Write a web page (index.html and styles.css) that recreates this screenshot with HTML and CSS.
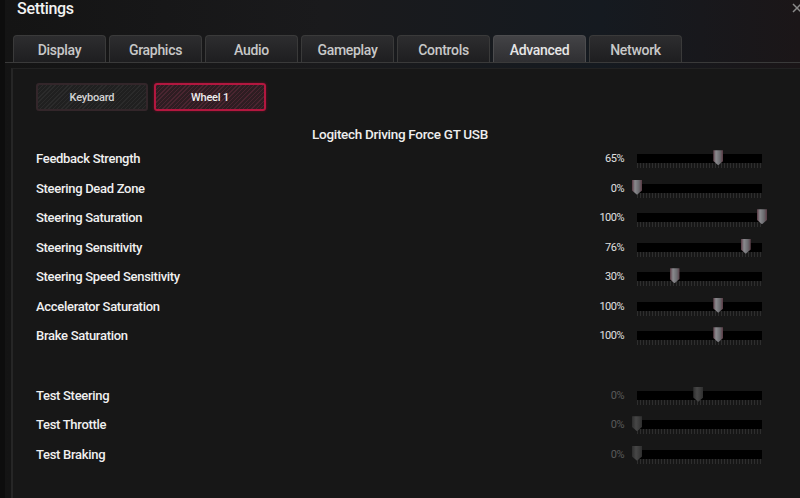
FILE: index.html
```html
<!DOCTYPE html>
<html lang="en">
<head>
    <meta charset="UTF-8">
    <title>Settings</title>
    <link rel="stylesheet" href="styles.css">
</head>
<body>

<div class="window">
    <header class="titlebar">
        <h1>Settings</h1>
        <svg class="close" width="8" height="12" viewBox="0 0 8 12"><path d="M1 2 L9 10 M9 2 L1 10" stroke="#8a8a8a" stroke-width="1.5"/></svg>
    </header>

    <nav class="tabs">
        <div class="tab">Display</div>
        <div class="tab">Graphics</div>
        <div class="tab">Audio</div>
        <div class="tab">Gameplay</div>
        <div class="tab">Controls</div>
        <div class="tab active">Advanced</div>
        <div class="tab">Network</div>
    </nav>

    <section class="panel">
        <div class="devices">
            <button class="device">Keyboard</button>
            <button class="device selected">Wheel 1</button>
        </div>

        <h2 class="device-name">Logitech Driving Force GT USB</h2>

        <ul class="settings">
            <li class="row"><span class="label">Feedback Strength</span><span class="value">65%</span><div class="slider"><span class="thumb" style="left: 65%"></span></div></li>
            <li class="row"><span class="label">Steering Dead Zone</span><span class="value">0%</span><div class="slider"><span class="thumb" style="left: 0%"></span></div></li>
            <li class="row"><span class="label">Steering Saturation</span><span class="value">100%</span><div class="slider"><span class="thumb" style="left: 100%"></span></div></li>
            <li class="row"><span class="label">Steering Sensitivity</span><span class="value">76%</span><div class="slider"><span class="thumb" style="left: 87%"></span></div></li>
            <li class="row"><span class="label">Steering Speed Sensitivity</span><span class="value">30%</span><div class="slider"><span class="thumb" style="left: 30%"></span></div></li>
            <li class="row"><span class="label">Accelerator Saturation</span><span class="value">100%</span><div class="slider"><span class="thumb" style="left: 65%"></span></div></li>
            <li class="row"><span class="label">Brake Saturation</span><span class="value">100%</span><div class="slider"><span class="thumb" style="left: 65%"></span></div></li>
        </ul>

        <ul class="settings tests">
            <li class="row"><span class="label">Test Steering</span><span class="value">0%</span><div class="slider"><span class="thumb" style="left: 49%"></span></div></li>
            <li class="row"><span class="label">Test Throttle</span><span class="value">0%</span><div class="slider"><span class="thumb" style="left: 0%"></span></div></li>
            <li class="row"><span class="label">Test Braking</span><span class="value">0%</span><div class="slider"><span class="thumb" style="left: 0%"></span></div></li>
        </ul>
    </section>
</div>

</body>
</html>
```

FILE: styles.css
```css
html, body {
    margin: 0;
    height: 100%;
    background: #121212;
    overflow: hidden;
}
body {
    font-family: Roboto, "Liberation Sans", sans-serif;
    color: #e8e8e8;
}
.window {
    height: 100%;
    display: flex;
    flex-direction: column;
    background: linear-gradient(90deg, #141414 0%, #1a1a1c 40%, #151a20 75%, #1b1618 100%);
    border-left: 5px solid #0d0d0d;
    box-sizing: border-box;
}
.titlebar {
    height: 35px;
    display: flex;
    justify-content: space-between;
    align-items: flex-start;
    padding: 0 0 0 12px;
}
.titlebar h1 {
    margin: 0;
    font-size: 16px;
    font-weight: 500;
    line-height: 17px;
    letter-spacing: -0.3px;
    color: #f2f2f2;
}
.close {
    margin-top: 2px;
}
.tabs {
    display: flex;
    gap: 3px;
    padding-left: 8px;
    height: 27px;
    border-bottom: 1px solid #3a3a3a;
}
.tab {
    width: 93px;
    box-sizing: border-box;
    border: 1px solid #3a3a3a;
    border-bottom: none;
    border-radius: 4px 4px 0 0;
    background: linear-gradient(#2d2d2f, #1e1e20);
    color: #c8c8c8;
    font-size: 14px;
    font-weight: 500;
    letter-spacing: -0.3px;
    text-align: center;
    line-height: 28px;
}
.tab.active {
    background: linear-gradient(#434346, #2f2f32);
    color: #e6e6e6;
    border-color: #4c4c4e;
}
.panel {
    flex: 1;
    margin: 5px 0 0 6px;
    background: #171717;
    border-left: 2px solid #262626;
    border-top: 1px solid #222;
    padding: 14px 0 0 23px;
}
.devices {
    display: flex;
    gap: 6px;
}
.device {
    width: 112px;
    height: 28px;
    border-radius: 3px;
    border: 2px solid #33262a;
    background: repeating-linear-gradient(135deg, #2b2b2b 0 1px, #202020 1px 3px);
    color: #d4d4d4;
    font-family: Roboto, "Liberation Sans", sans-serif;
    font-size: 11px;
    font-weight: 500;
    letter-spacing: -0.2px;
    padding: 0;
}
.device.selected {
    border-color: #b3173f;
    background: repeating-linear-gradient(135deg, #4a2530 0 1px, #2e1d22 1px 3px);
    color: #eee;
    box-shadow: 0 0 3px #6a0f25;
}
.device-name {
    margin: 13px 0 0 0;
    padding-right: 36px;
    font-size: 13.5px;
    font-weight: 500;
    letter-spacing: -0.3px;
    text-align: center;
    color: #eeeeee;
    line-height: 20px;
}
.settings {
    list-style: none;
    margin: 0;
    padding: 0;
}
.tests {
    margin-top: 30px;
}
.row {
    display: flex;
    align-items: center;
    height: 29.5px;
}
.label {
    flex: 1;
    font-size: 13px;
    font-weight: 500;
    letter-spacing: -0.3px;
    color: #f0f0f0;
}
.value {
    width: 40px;
    text-align: right;
    font-size: 11px;
    letter-spacing: -0.5px;
    color: #e0e0e0;
    margin-right: 13px;
}
.slider {
    position: relative;
    width: 125px;
    height: 9px;
    margin-right: 38px;
    background: #000;
}
.slider::after {
    content: "";
    position: absolute;
    left: 0;
    right: 0;
    top: 9px;
    height: 5px;
    background: repeating-linear-gradient(90deg, #2e2e2e 0 1px, transparent 1px 3px);
}
.thumb {
    position: absolute;
    top: -4px;
    width: 10px;
    height: 15px;
    margin-left: -5px;
    background: linear-gradient(90deg, #5a3a44, #8a8a8e 30%, #6a6a6e 70%, #5a3a44);
    clip-path: polygon(0 0, 100% 0, 100% 72%, 50% 100%, 0 72%);
    z-index: 1;
}
.tests .value {
    color: #5a5a5a;
}
.tests .thumb {
    background: linear-gradient(90deg, #2e2e2e, #474747 40%, #3c3c3c 70%, #2e2e2e);
}
```
